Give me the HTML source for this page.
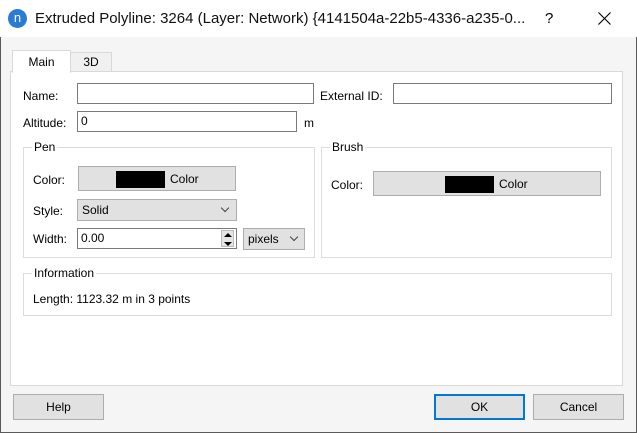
<!DOCTYPE html>
<html><head><style>
*{box-sizing:border-box;margin:0;padding:0}
body{width:637px;height:433px;position:relative;font-family:"Liberation Sans",sans-serif;font-size:12px;color:#000;background:#f0f0f0;overflow:hidden}
.a{position:absolute}
.win{left:0;top:0;width:637px;height:433px;border:1px solid #5a5a5a;border-top:none;background:#f5f5f5}
.title{left:0;top:0;width:637px;height:37px;background:#fff}
.inp{position:absolute;background:#fff;border:1px solid #7a7a7a;height:21px;padding-left:3px;line-height:19px}
.btn{position:absolute;background:#e1e1e1;border:1px solid #adadad;text-align:center}
.grp{position:absolute;border:1px solid #dcdcdc}
.gt{position:absolute;background:#fff;padding:0 2px;top:-8px;left:8px;line-height:14px}
.lbl{position:absolute;line-height:14px}
.chev{position:absolute;width:6px;height:6px;border-right:1px solid #444;border-bottom:1px solid #444;transform:rotate(45deg)}
</style></head><body>
<div class="a win"></div>
<div class="a title"></div>
<div class="a" style="left:8px;top:9px;width:19px;height:19px;border-radius:50%;background:#2a7bd4;color:#fff;font-size:13px;text-align:center;line-height:18px">n</div>
<div class="a" style="left:35px;top:10px;font-size:15px;color:#111">Extruded Polyline: 3264 (Layer: Network) {4141504a-22b5-4336-a235-0...</div>
<div class="a" style="left:545px;top:10px;font-size:15px">?</div>
<svg class="a" style="left:598px;top:12px" width="13" height="13"><path d="M0.5 0.5L12.5 12.5M12.5 0.5L0.5 12.5" stroke="#000" stroke-width="1.1"/></svg>

<div class="a" style="left:10px;top:71px;width:613px;height:315px;background:#fff;border:1px solid #d9d9d9"></div>
<div class="a" style="left:12px;top:50px;width:59px;height:23px;background:#fff;border:1px solid #d9d9d9;border-bottom:none;text-align:center;line-height:22px">Main</div>
<div class="a" style="left:70px;top:52px;width:42px;height:20px;background:#f0f0f0;border:1px solid #d9d9d9;text-align:center;line-height:19px">3D</div>

<div class="lbl" style="left:23px;top:89px">Name:</div>
<div class="inp" style="left:77px;top:83px;width:237px"></div>
<div class="lbl" style="left:320px;top:89px">External ID:</div>
<div class="inp" style="left:393px;top:83px;width:219px"></div>
<div class="lbl" style="left:23px;top:116px">Altitude:</div>
<div class="inp" style="left:77px;top:111px;width:220px">0</div>
<div class="lbl" style="left:304px;top:116px">m</div>

<div class="grp" style="left:23px;top:147px;width:292px;height:111px"><div class="gt">Pen</div></div>
<div class="lbl" style="left:33px;top:173px">Color:</div>
<div class="btn" style="left:78px;top:166px;width:158px;height:25px"><div class="a" style="left:37px;top:4px;width:49px;height:17px;background:#000"></div><div class="a" style="left:91px;top:5px">Color</div></div>
<div class="lbl" style="left:33px;top:204px">Style:</div>
<div class="btn" style="left:77px;top:199px;width:160px;height:22px;text-align:left;padding-left:4px;line-height:20px">Solid<div class="chev" style="left:144px;top:5px"></div></div>
<div class="lbl" style="left:33px;top:232px">Width:</div>
<div class="inp" style="left:77px;top:228px;width:160px">0.00
<div class="a" style="left:143px;top:1px;width:13px;height:17px;background:#e5e5e5;border:1px solid #bbb"></div>
<svg class="a" style="left:146px;top:3px" width="8" height="15"><path d="M0 5L4 1L8 5ZM0 10L8 10L4 14Z" fill="#000"/></svg></div>
<div class="btn" style="left:243px;top:228px;width:62px;height:22px;text-align:left;padding-left:4px;line-height:20px">pixels<div class="chev" style="left:47px;top:5px"></div></div>

<div class="grp" style="left:321px;top:147px;width:291px;height:111px"><div class="gt">Brush</div></div>
<div class="lbl" style="left:331px;top:178px">Color:</div>
<div class="btn" style="left:373px;top:171px;width:228px;height:25px"><div class="a" style="left:71px;top:4px;width:49px;height:17px;background:#000"></div><div class="a" style="left:125px;top:5px">Color</div></div>

<div class="grp" style="left:23px;top:273px;width:589px;height:43px"><div class="gt">Information</div></div>
<div class="lbl" style="left:33px;top:292px">Length: 1123.32 m in 3 points</div>

<div class="btn" style="left:13px;top:394px;width:91px;height:26px;line-height:24px">Help</div>
<div class="btn" style="left:434px;top:394px;width:91px;height:26px;line-height:22px;border:2px solid #0078d7">OK</div>
<div class="btn" style="left:533px;top:394px;width:91px;height:26px;line-height:24px">Cancel</div>
</body></html>
